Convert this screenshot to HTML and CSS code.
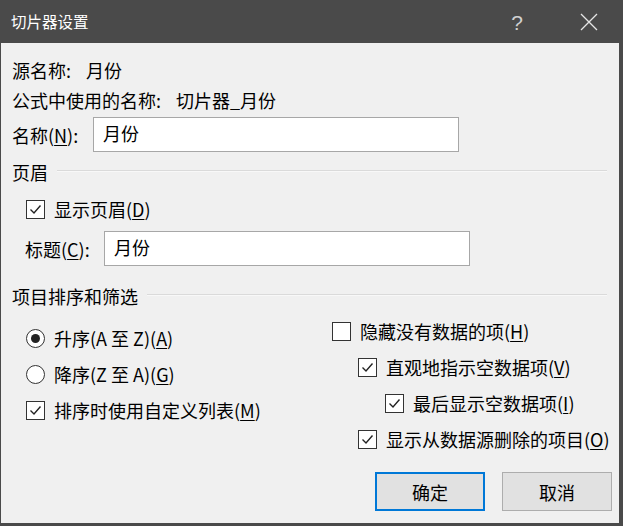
FILE: index.html
```html
<!DOCTYPE html>
<html lang="zh-CN">
<head>
<meta charset="utf-8">
<title>切片器设置</title>
<link rel="stylesheet" href="styles.css">
</head>
<body>
<div class="window">
  <div class="titlebar">
    <span class="title">切片器设置</span>
    <span class="help">?</span>
    <span class="close">
      <svg width="18" height="18" viewBox="0 0 18 18"><path d="M1 1L17 17M17 1L1 17" stroke="#e6e6e6" stroke-width="1.3" fill="none"/></svg>
    </span>
  </div>
  <div class="content">
    <div class="row r1"><span>源名称:</span><span class="val">月份</span></div>
    <div class="row"><span>公式中使用的名称:</span><span class="val">切片器_月份</span></div>
    <div class="row field r3"><span class="lbl1">名称(<u>N</u>):</span><div class="input in1">月份</div></div>

    <div class="group g1"><span>页眉</span><div class="sep"></div></div>
    <div class="row check-row c1">
      <span class="cb"><svg width="19" height="19" viewBox="0 0 19 19"><path d="M4.5 9.5L8 13L14.5 5.5" stroke="#222" stroke-width="1.4" fill="none"/></svg></span>
      <span>显示页眉(<u>D</u>)</span>
    </div>
    <div class="row field r5"><span class="lbl2">标题(<u>C</u>):</span><div class="input in2">月份</div></div>

    <div class="group g2"><span>项目排序和筛选</span><div class="sep"></div></div>
    <div class="cols">
      <div class="col left">
        <div class="opt"><span class="radio on"></span><span>升序(A 至 Z)(<u>A</u>)</span></div>
        <div class="opt"><span class="radio"></span><span>降序(Z 至 A)(<u>G</u>)</span></div>
        <div class="opt"><span class="cb"><svg width="19" height="19" viewBox="0 0 19 19"><path d="M4.5 9.5L8 13L14.5 5.5" stroke="#222" stroke-width="1.4" fill="none"/></svg></span><span>排序时使用自定义列表(<u>M</u>)</span></div>
      </div>
      <div class="col right">
        <div class="opt"><span class="cb"></span><span>隐藏没有数据的项(<u>H</u>)</span></div>
        <div class="opt ind1"><span class="cb"><svg width="19" height="19" viewBox="0 0 19 19"><path d="M4.5 9.5L8 13L14.5 5.5" stroke="#222" stroke-width="1.4" fill="none"/></svg></span><span>直观地指示空数据项(<u>V</u>)</span></div>
        <div class="opt ind2"><span class="cb"><svg width="19" height="19" viewBox="0 0 19 19"><path d="M4.5 9.5L8 13L14.5 5.5" stroke="#222" stroke-width="1.4" fill="none"/></svg></span><span>最后显示空数据项(<u>I</u>)</span></div>
        <div class="opt ind1"><span class="cb"><svg width="19" height="19" viewBox="0 0 19 19"><path d="M4.5 9.5L8 13L14.5 5.5" stroke="#222" stroke-width="1.4" fill="none"/></svg></span><span>显示从数据源删除的项目(<u>O</u>)</span></div>
      </div>
    </div>
    <div class="buttons">
      <div class="btn primary">确定</div>
      <div class="btn">取消</div>
    </div>
  </div>
</div>
</body>
</html>
```
FILE: styles.css
```css
html, body {
  margin: 0;
  padding: 0;
  width: 623px;
  height: 526px;
  overflow: hidden;
  background: #4a4a4a;
}
.window {
  width: 623px;
  height: 526px;
  box-sizing: border-box;
  border-left: 1px solid #4a4a4a;
  border-right: 4px solid #4a4a4a;
  border-bottom: 3px solid #4a4a4a;
  background: #f0f0f0;
  display: flex;
  flex-direction: column;
  font-family: "Noto Sans CJK SC", "Noto Sans", sans-serif;
  font-size: 18px;
  color: #000;
}
.titlebar {
  height: 43px;
  background: #4a4a4a;
  display: flex;
  align-items: center;
  color: #fff;
  flex: none;
}
.title {
  margin-left: 10px;
  font-size: 15.5px;
  flex: 1;
  line-height: 1;
  margin-top: 1px;
}
.help {
  font-family: "Liberation Sans", sans-serif;
  font-size: 21px;
  color: #d0d0d0;
  margin-right: 57px;
  margin-top: 1px;
  line-height: 1;
}
.close {
  display: flex;
  margin-right: 21px;
  margin-top: 1px;
}
.content {
  flex: 1;
  display: flex;
  flex-direction: column;
  padding-left: 11px;
  padding-right: 7px;
}
.row {
  display: flex;
  align-items: center;
  height: 30px;
  line-height: 1;
  white-space: nowrap;
}
.r1 { margin-top: 12px; }
.val { margin-left: 15px; }
.field { height: 35px; }
.r3 { margin-top: 2px; }
.lbl1 { width: 81px; }
.lbl2 { width: 79px; }
.r5 { margin-top: 10px; padding-left: 13px; }
.input {
  height: 35px;
  box-sizing: border-box;
  border: 1px solid #a7a7a7;
  background: #fff;
  display: flex;
  align-items: center;
  padding-left: 9px;
  padding-bottom: 3px;
}
.in1 { width: 366px; }
.in2 { width: 366px; }
.group {
  display: flex;
  align-items: center;
  height: 24px;
  line-height: 1;
}
.g1 { margin-top: 8px; }
.g2 { margin-top: 18px; }
.sep {
  flex: 1;
  height: 1px;
  background: #dadada;
  border-bottom: 1px solid #f8f8f8;
  margin-left: 9px;
  margin-right: 5px;
  margin-top: -2px;
}
.check-row { height: 24px; }
.c1 { margin-top: 13px; padding-left: 14px; }
.cb {
  width: 19px;
  height: 19px;
  box-sizing: border-box;
  border: 1px solid #333;
  background: #fff;
  display: flex;
  flex: none;
  margin-right: 9px;
  position: relative;
}
.cb svg { position: absolute; left: -1px; top: -1px; }
.radio {
  width: 19px;
  height: 19px;
  box-sizing: border-box;
  border: 1px solid #333;
  border-radius: 50%;
  background: #fff;
  flex: none;
  margin-right: 9px;
  display: flex;
  align-items: center;
  justify-content: center;
}
.radio.on::after {
  content: "";
  width: 9px;
  height: 9px;
  border-radius: 50%;
  background: #222;
}
.cols {
  display: flex;
}
.col {
  display: flex;
  flex-direction: column;
  gap: 12px;
}
.left { margin-top: 18px; padding-left: 14px; width: 306px; }
.right { margin-top: 11px; }
.opt {
  display: flex;
  align-items: center;
  height: 24px;
  line-height: 1;
  white-space: nowrap;
}
.ind1 { padding-left: 26px; }
.ind2 { padding-left: 53px; }
.buttons {
  display: flex;
  justify-content: flex-end;
  gap: 17px;
  margin-top: 21px;
}
.btn {
  width: 110px;
  height: 39px;
  box-sizing: border-box;
  border: 1px solid #adadad;
  background: #e1e1e1;
  display: flex;
  align-items: center;
  justify-content: center;
  line-height: 1;
}
.btn.primary {
  border: 2px solid #0078d7;
}
u { text-decoration-thickness: 1px; text-underline-offset: 2px; }
```
